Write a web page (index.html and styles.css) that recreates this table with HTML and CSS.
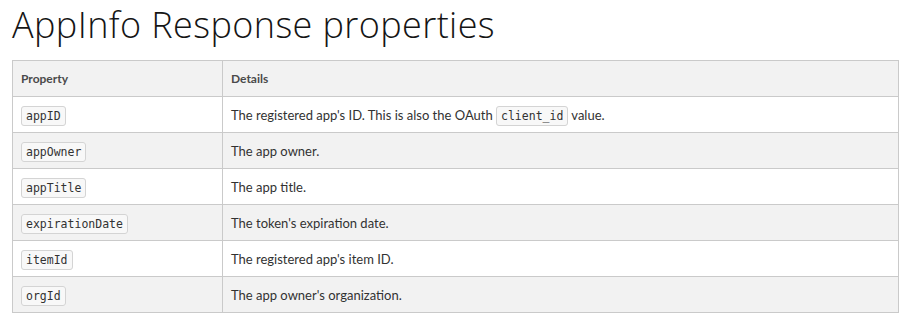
FILE: index.html
```html
<!DOCTYPE html>
<html>
<head>
<meta charset="utf-8">
<link rel="stylesheet" href="styles.css">
</head>
<body>
<main class="page">
  <h1 class="title">AppInfo Response properties</h1>
  <table class="props">
    <thead>
      <tr><th class="col-prop">Property</th><th>Details</th></tr>
    </thead>
    <tbody>
      <tr><td><code>appID</code></td><td>The registered app's ID. This is also the OAuth <code>client_id</code> value.</td></tr>
      <tr><td><code>appOwner</code></td><td>The app owner.</td></tr>
      <tr><td><code>appTitle</code></td><td>The app title.</td></tr>
      <tr><td><code>expirationDate</code></td><td>The token's expiration date.</td></tr>
      <tr><td><code>itemId</code></td><td>The registered app's item ID.</td></tr>
      <tr><td><code>orgId</code></td><td>The app owner's organization.</td></tr>
    </tbody>
  </table>
</main>
</body>
</html>
```
FILE: styles.css
```css
html, body { margin: 0; padding: 0; background: #fff; }
.page {
  padding: 0 12px;
  font-family: Lato, "Open Sans", sans-serif;
  color: #323232;
}
.title {
  margin: 0 0 11px 0;
  font-family: "Open Sans", sans-serif;
  font-weight: 300;
  font-size: 36px;
  letter-spacing: 0.4px;
  line-height: 49px;
  color: #151515;
}
.props {
  width: 887px;
  border-collapse: collapse;
  font-size: 13px;
}
.props th, .props td {
  border: 1px solid #cacaca;
  height: 36px;
  padding: 0 8px;
  text-align: left;
  vertical-align: middle;
  box-sizing: border-box;
}
.props th {
  font-size: 12px;
  font-weight: 700;
  color: #4a4a4a;
  background: #f2f2f2;
}
.col-prop { width: 210px; }
.props tbody tr:nth-child(even) td { background: #f2f2f2; }
.props tbody tr:nth-child(odd) td { background: #fff; }
code {
  font-family: "DejaVu Sans Mono", monospace;
  font-size: 11.5px;
  color: #323232;
  background: #f8f8f8;
  border: 1px solid #d4d4d4;
  border-radius: 3px;
  padding: 2px 4px;
}
```
